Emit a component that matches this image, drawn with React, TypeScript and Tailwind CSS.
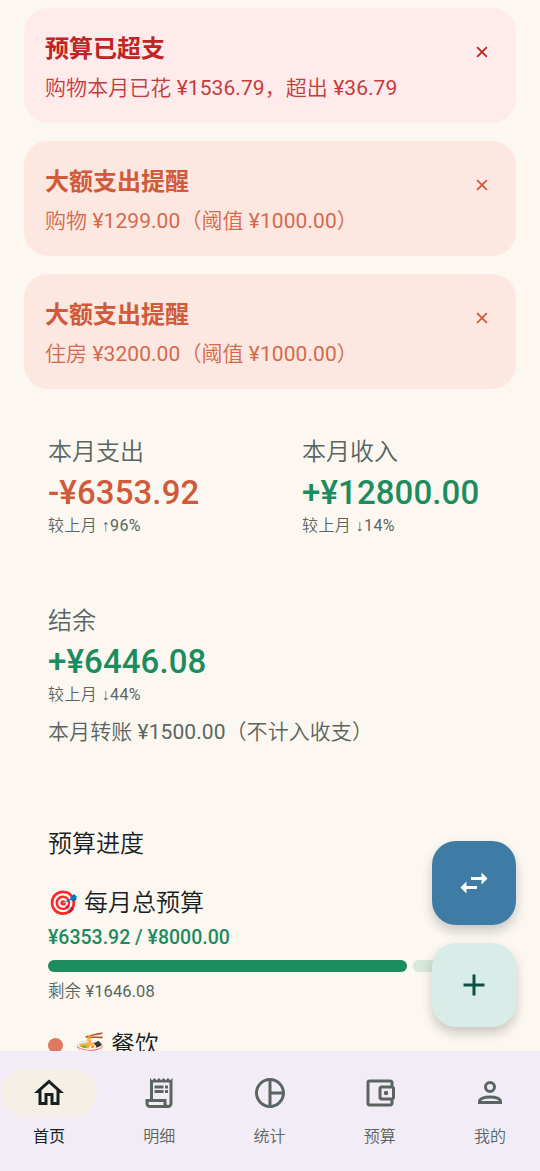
import type { ReactNode } from "react";
import {
  MdAdd,
  MdOutlineAccountBalanceWallet,
  MdOutlineHome,
  MdOutlineReceiptLong,
  MdPieChartOutline,
  MdSwapHoriz,
} from "react-icons/md";

type AlertProps = { title: string; body: string; tone: string; bodyTone: string };

const alerts: AlertProps[] = [
  {
    title: "预算已超支",
    body: "购物本月已花 ¥1536.79，超出 ¥36.79",
    tone: "bg-[#ffebeb] text-[#c02424]",
    bodyTone: "text-[#c63a3a]",
  },
  {
    title: "大额支出提醒",
    body: "购物 ¥1299.00（阈值 ¥1000.00）",
    tone: "bg-[#fce7e1] text-[#d05a3a]",
    bodyTone: "text-[#d5694c]",
  },
  {
    title: "大额支出提醒",
    body: "住房 ¥3200.00（阈值 ¥1000.00）",
    tone: "bg-[#fce7e1] text-[#d05a3a]",
    bodyTone: "text-[#d5694c]",
  },
];

/* Han characters take the light cut, while Latin digits keep the regular one. */
function Mixed({ text }: { text: string }) {
  return (
    <>
      {text.split(/([\u3000-\u9fff\uff00-\uffef]+)/).map((part, i) => (
        <span key={i} className={i % 2 ? "font-[350]" : ""}>
          {part}
        </span>
      ))}
    </>
  );
}

function AlertCard({ title, body, tone, bodyTone }: AlertProps) {
  return (
    <div className={`flex h-[115px] rounded-[24px] pl-[21px] pr-[28px] ${tone}`}>
      <div className="flex-1 pt-[23px]">
        <div className="text-[24px] leading-[36px] font-bold">{title}</div>
        <div className={`mt-[6px] text-[21px] leading-[30px] tracking-[0.07px] ${bodyTone}`}>
          <Mixed text={body} />
        </div>
      </div>
      <svg viewBox="0 0 12 12" className="mt-[38px] size-[12px]" fill="none" stroke="currentColor" strokeWidth="1.8">
        <path d="M1.1 1.1l9.8 9.8M10.9 1.1L1.1 10.9" />
      </svg>
    </div>
  );
}

type StatProps = { label: string; value: string; arrow: string; percent: string; color: string };

function Stat({ label, value, arrow, percent, color }: StatProps) {
  return (
    <div>
      <div className="pt-px text-[24px] leading-[36px] font-[350] text-[#5a6562]">{label}</div>
      <div className={`mt-[2px] text-[33px] leading-[42px] font-medium tracking-[0.1px] ${color}`}>{value}</div>
      <div className="h-[24px] text-[16px] leading-[24px] tracking-[0.4px] text-[#5a6562]">
        <Mixed text="较上月 " />
        <span className="font-['Liberation_Sans']">{arrow}</span>
        {percent}
      </div>
    </div>
  );
}

function PersonIcon() {
  return (
    <svg viewBox="0 0 24 24" className="size-[36px]" fill="none" stroke="currentColor" strokeWidth="2">
      <circle cx="12" cy="8" r="3" />
      <path d="M5 19v-.8C5 16.4 8.2 15.2 12 15.2s7 1.2 7 3V19z" transform="translate(0 -.6)" />
    </svg>
  );
}

function NavItem({ icon, label, active = false }: { icon: ReactNode; label: string; active?: boolean }) {
  return (
    <button
      className={`flex w-[96px] flex-col items-center pt-[18px] ${active ? "text-[#16211f]" : "text-[#5a6562]"}`}
    >
      <span
        className={`flex h-[48px] w-[96px] items-center justify-center rounded-full text-[36px] ${active ? "bg-[#f5efe6]" : ""}`}
      >
        {icon}
      </span>
      <span className={`mt-[8px] text-[16px] leading-[24px] ${active ? "" : "font-[350]"}`}>{label}</span>
    </button>
  );
}

export default function App() {
  return (
    <div className="relative flex h-[1171px] w-[540px] flex-col overflow-hidden bg-[#fcf8f1] font-['Roboto','Noto_Sans_CJK_SC',sans-serif]">
      <main className="h-[1051px] shrink-0 overflow-hidden px-[24px] pt-[8px]">
        <section className="flex flex-col gap-[18px]">
          {alerts.map((a) => (
            <AlertCard key={a.body} {...a} />
          ))}
        </section>

        <section className="mt-[44px] px-[24px]">
          <div className="grid grid-cols-[254px_1fr]">
            <Stat label="本月支出" value="-¥6353.92" arrow="↑" percent="96%" color="text-[#d05a3a]" />
            <Stat label="本月收入" value="+¥12800.00" arrow="↓" percent="14%" color="text-[#1c8b5e]" />
          </div>
          <div className="mt-[64px]">
            <Stat label="结余" value="+¥6446.08" arrow="↓" percent="44%" color="text-[#1c8b5e]" />
          </div>
          <div className="mt-[10px] text-[21px] leading-[30px] tracking-[0.07px] text-[#5a6562]">
            <Mixed text="本月转账 ¥1500.00（不计入收支）" />
          </div>
        </section>

        <section className="mt-[79px] px-[24px] text-[#16211f]">
          <h2 className="text-[24px] leading-[36px] font-[350]">预算进度</h2>
          <div className="mt-[23px] flex items-center gap-[6px] text-[24px] leading-[36px]">
            <span className="w-[30px]">🎯</span>
            <span className="font-[350]">每月总预算</span>
          </div>
          <div className="mt-[2px] text-[19.5px] leading-[30px] font-medium text-[#1c8b5e]">¥6353.92 / ¥8000.00</div>
          <div className="mt-[7px] flex h-[12px] gap-[6px]">
            <div className="w-[359px] rounded-full bg-[#1c8b5e]" />
            <div className="flex-1 rounded-full bg-[#d6e7db]" />
          </div>
          <div className="mt-[8px] text-[16.5px] leading-[24px] tracking-[0.1px] text-[#5a6562]">
            <Mixed text="剩余 ¥1646.08" />
          </div>
          <div className="mt-[23px] flex items-center text-[24px] leading-[36px]">
            <span className="size-[15px] rounded-full bg-[#de785f]" />
            <span className="ml-[12px] w-[30px]">🍜</span>
            <span className="ml-[6px] font-[350]">餐饮</span>
          </div>
        </section>
      </main>

      <nav className="flex h-[120px] shrink-0 justify-between bg-[#f2ecf6] pr-[2px] pl-px">
        <NavItem active icon={<MdOutlineHome />} label="首页" />
        <NavItem icon={<MdOutlineReceiptLong />} label="明细" />
        <NavItem icon={<MdPieChartOutline />} label="统计" />
        <NavItem icon={<MdOutlineAccountBalanceWallet />} label="预算" />
        <NavItem icon={<PersonIcon />} label="我的" />
      </nav>

      <div className="absolute top-[841px] right-[24px] flex flex-col gap-[18px]">
        <button className="flex size-[84px] items-center justify-center rounded-[24px] bg-[#3e7ca6] text-[36px] text-white shadow-[0_6px_12px_rgba(0,0,0,0.2)]">
          <MdSwapHoriz />
        </button>
        <button className="flex size-[84px] items-center justify-center rounded-[24px] bg-[#d8ede8] text-[36px] text-[#0b5047] shadow-[0_6px_12px_rgba(0,0,0,0.2)]">
          <MdAdd />
        </button>
      </div>
    </div>
  );
}
